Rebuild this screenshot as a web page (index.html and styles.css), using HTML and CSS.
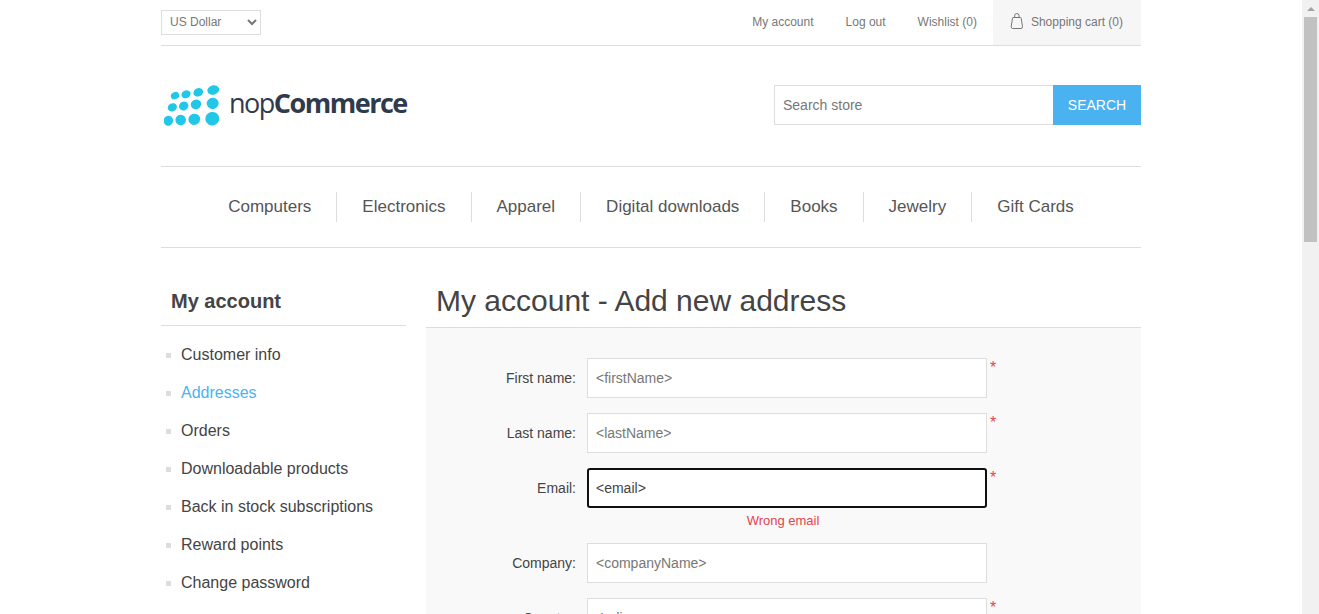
FILE: index.html
```html
<!DOCTYPE html>
<html lang="en">
<head>
    <meta charset="UTF-8">
    <meta name="viewport" content="width=device-width, initial-scale=1.0">
    <title>My account - Add new address</title>
    <link rel="stylesheet" href="styles.css">
</head>
<body>
    <div class="page">
        <div class="master">
            <div class="header-links">
                <select class="currency">
                    <option>US Dollar</option>
                </select>
                <nav class="top-links">
                    <a href="#">My account</a>
                    <a href="#">Log out</a>
                    <a href="#">Wishlist (0)</a>
                    <a href="#" class="cart-link">
                        <svg class="bag" width="14" height="17" viewBox="0 0 14 17" fill="none" stroke="#777" stroke-width="1">
                            <path d="M4 5.500 H11.500 Q12 5.500 12.200 6.200 L13.500 14.500 Q13.700 16.500 12 16.500 H3.700 Q2 16.500 2.200 14.500 L3.500 6.200 Q3.700 5.500 4 5.500 Z"/>
                            <path d="M5.700 5.500 V3.500 Q5.700 1.500 7.800 1.500 Q10 1.500 10 3.500 V5.500"/>
                        </svg>
                        Shopping cart (0)
                    </a>
                </nav>
            </div>

            <div class="header-main">
                <a href="#" class="logo">
                    <svg width="58" height="44" viewBox="0 0 58 44" fill="#21c7e6">
                        <ellipse cx="11" cy="11.700" rx="4.300" ry="3.500" transform="rotate(-25 11 11.700)"/>
                        <ellipse cx="22" cy="10.300" rx="4.700" ry="3.800" transform="rotate(-25 22 10.300)"/>
                        <ellipse cx="34.300" cy="8.300" rx="5" ry="4.100" transform="rotate(-25 34.300 8.300)"/>
                        <ellipse cx="49.300" cy="6" rx="6" ry="4.700" transform="rotate(-15 49.300 6)"/>
                        <ellipse cx="8.300" cy="23.300" rx="4.700" ry="4" transform="rotate(-25 8.300 23.300)"/>
                        <ellipse cx="19.700" cy="22" rx="4.800" ry="4.300" transform="rotate(-25 19.700 22)"/>
                        <ellipse cx="32" cy="20.300" rx="5.300" ry="4.800" transform="rotate(-25 32 20.300)"/>
                        <ellipse cx="48.700" cy="19.300" rx="6" ry="5.600" transform="rotate(-15 48.700 19.300)"/>
                        <ellipse cx="4.300" cy="36.700" rx="4.700" ry="5" transform="rotate(20 4.300 36.700)"/>
                        <ellipse cx="16.700" cy="36" rx="5.300" ry="5.200" transform="rotate(-20 16.700 36)"/>
                        <ellipse cx="30.300" cy="35.300" rx="6" ry="5.600" transform="rotate(-20 30.300 35.300)"/>
                        <ellipse cx="48.300" cy="34.700" rx="7" ry="6.800" transform="rotate(-10 48.300 34.700)"/>
                    </svg>
                    <span class="logo-text">nop<b>Commerce</b></span>
                </a>
                <form class="search-box">
                    <input type="text" placeholder="Search store">
                    <button type="button">Search</button>
                </form>
            </div>

            <ul class="menu">
                <li><a href="#">Computers</a></li>
                <li><a href="#">Electronics</a></li>
                <li><a href="#">Apparel</a></li>
                <li><a href="#">Digital downloads</a></li>
                <li><a href="#">Books</a></li>
                <li><a href="#">Jewelry</a></li>
                <li><a href="#">Gift Cards</a></li>
            </ul>

            <div class="columns">
                <aside class="side">
                    <h3 class="side-title">My account</h3>
                    <ul class="side-list">
                        <li><a href="#">Customer info</a></li>
                        <li class="active"><a href="#">Addresses</a></li>
                        <li><a href="#">Orders</a></li>
                        <li><a href="#">Downloadable products</a></li>
                        <li><a href="#">Back in stock subscriptions</a></li>
                        <li><a href="#">Reward points</a></li>
                        <li><a href="#">Change password</a></li>
                    </ul>
                </aside>

                <main class="content">
                    <h1 class="page-title">My account - Add new address</h1>
                    <form class="address-form">
                        <div class="row">
                            <label for="first-name">First name:</label>
                            <input id="first-name" type="text" placeholder="&lt;firstName&gt;">
                            <span class="required">*</span>
                        </div>
                        <div class="row">
                            <label for="last-name">Last name:</label>
                            <input id="last-name" type="text" placeholder="&lt;lastName&gt;">
                            <span class="required">*</span>
                        </div>
                        <div class="row has-error">
                            <label for="email">Email:</label>
                            <input id="email" class="focused" type="text" value="&lt;email&gt;">
                            <span class="required">*</span>
                            <span class="error">Wrong email</span>
                        </div>
                        <div class="row">
                            <label for="company">Company:</label>
                            <input id="company" type="text" placeholder="&lt;companyName&gt;">
                        </div>
                        <div class="row">
                            <label for="country">Country:</label>
                            <select id="country"><option>India</option></select>
                            <span class="required">*</span>
                        </div>
                    </form>
                </main>
            </div>
        </div>
    </div>

    <div class="scrollbar">
        <span class="arrow"></span>
        <span class="thumb"></span>
    </div>
</body>
</html>
```

FILE: styles.css
```css
html, body {
    height: 100%;
}

body {
    font-family: "Liberation Sans", Arial, sans-serif;
    font-size: 14px;
    color: #444;
    background-color: #fff;
    margin: 0;
    padding: 0;
    display: flex;
    overflow: hidden;
}

a {
    color: inherit;
    text-decoration: none;
}

ul {
    list-style: none;
    margin: 0;
    padding: 0;
}

.page {
    flex: 1;
    min-width: 0;
    height: 614px;
    overflow: hidden;
}

.master {
    width: 980px;
    margin: 0 auto;
}

/* top bar */
.header-links {
    display: flex;
    justify-content: space-between;
    align-items: center;
    height: 45px;
    border-bottom: 1px solid #ddd;
}

.currency {
    width: 100px;
    height: 25px;
    margin-top: -1px;
    padding: 0 4px;
    font-family: inherit;
    font-size: 12px;
    color: #777;
    background-color: #fff;
    border: 1px solid #ddd;
    border-radius: 0;
}

.top-links {
    display: flex;
    height: 100%;
    font-size: 12px;
    color: #777;
}

.top-links a {
    display: flex;
    align-items: center;
    margin-right: 32px;
    padding-bottom: 2px;
    box-sizing: border-box;
}

.top-links .cart-link {
    margin: 0 0 0 -16px;
    padding: 0 18px 2px 16px;
    background-color: #f6f6f6;
}

.bag {
    margin-right: 8px;
    margin-top: -2px;
}

/* logo and search */
.header-main {
    display: flex;
    justify-content: space-between;
    align-items: center;
    height: 120px;
}

.logo {
    display: flex;
    align-items: center;
    margin-left: 3px;
}

.logo-text {
    margin-left: 7px;
    margin-bottom: 7px;
    font-family: "Open Sans", sans-serif;
    font-size: 27px;
    letter-spacing: -1.5px;
    color: #2f3a4c;
    line-height: 36px;
}

.logo-text b {
    font-weight: 700;
}

.search-box {
    display: flex;
    margin-bottom: 2px;
}

.search-box input {
    width: 279px;
    height: 40px;
    box-sizing: border-box;
    padding: 0 8px;
    font-family: inherit;
    font-size: 14px;
    border: 1px solid #ddd;
    border-right: none;
    outline: none;
}

.search-box input::placeholder {
    color: #777;
    opacity: 1;
}

.search-box button {
    width: 88px;
    height: 40px;
    border: none;
    padding: 0;
    font-family: inherit;
    font-size: 14px;
    text-transform: uppercase;
    color: #fff;
    background-color: #4ab2f1;
}

/* main menu */
.menu {
    display: flex;
    justify-content: center;
    align-items: center;
    height: 80px;
    border-top: 1px solid #ddd;
    border-bottom: 1px solid #ddd;
    font-size: 17px;
    color: #555;
}

.menu li {
    display: flex;
    align-items: center;
    height: 30px;
    padding: 0 25px;
    border-left: 1px solid #ddd;
}

.menu li:first-child {
    border-left: none;
}

/* columns */
.columns {
    display: flex;
    margin-top: 30px;
}

.side {
    width: 245px;
    margin-right: 20px;
    flex-shrink: 0;
}

.side-title {
    margin: 0;
    padding: 9px 10px 11px;
    height: 48px;
    box-sizing: border-box;
    font-size: 20px;
    line-height: 28px;
    font-weight: 700;
    color: #444;
    border-bottom: 1px solid #ddd;
}

.side-list {
    padding-top: 10px;
    font-size: 16px;
    color: #444;
}

.side-list li {
    position: relative;
    height: 38px;
    line-height: 38px;
    padding-left: 20px;
}

.side-list li::before {
    content: "";
    position: absolute;
    left: 5px;
    top: 17px;
    width: 5px;
    height: 5px;
    background-color: #ddd;
}

.side-list .active a {
    color: #4ab2f1;
}

.content {
    flex: 1;
    min-width: 0;
}

.page-title {
    margin: 0;
    padding: 0 10px;
    height: 50px;
    box-sizing: border-box;
    font-size: 30px;
    line-height: 46px;
    font-weight: 400;
    color: #444;
    border-bottom: 1px solid #ddd;
}

.address-form {
    padding: 30px 0 0;
    background-color: #f9f9f9;
}

.row {
    position: relative;
    display: flex;
    align-items: flex-start;
    margin-bottom: 15px;
}

.row.has-error {
    margin-bottom: 35px;
}

.row label {
    width: 150px;
    margin-right: 11px;
    line-height: 40px;
    text-align: right;
    color: #444;
}

.row input,
.row select {
    width: 400px;
    height: 40px;
    box-sizing: border-box;
    padding: 0 8px;
    font-family: inherit;
    font-size: 14px;
    color: #777;
    background-color: #fff;
    border: 1px solid #ddd;
    border-radius: 0;
    outline: none;
}

.row input::placeholder {
    color: #777;
    opacity: 1;
}

.row input.focused {
    border: 2px solid #101010;
    border-radius: 3px;
    padding: 0 7px;
    color: #444;
}

.required {
    margin-left: 3px;
    font-size: 16px;
    line-height: 20px;
    color: #e4444c;
}

.error {
    position: absolute;
    left: 161px;
    top: 45px;
    width: 392px;
    font-size: 13px;
    line-height: 16px;
    text-align: center;
    color: #e4434b;
}

/* scrollbar */
.scrollbar {
    width: 17px;
    height: 100%;
    flex-shrink: 0;
    display: flex;
    flex-direction: column;
    align-items: center;
    background-color: #f1f1f1;
}

.arrow {
    width: 0;
    height: 0;
    margin: 7px 0 6px;
    border-left: 4px solid transparent;
    border-right: 4px solid transparent;
    border-bottom: 4px solid #a3a3a3;
}

.thumb {
    width: 13px;
    height: 225px;
    background-color: #c1c1c1;
}
```
